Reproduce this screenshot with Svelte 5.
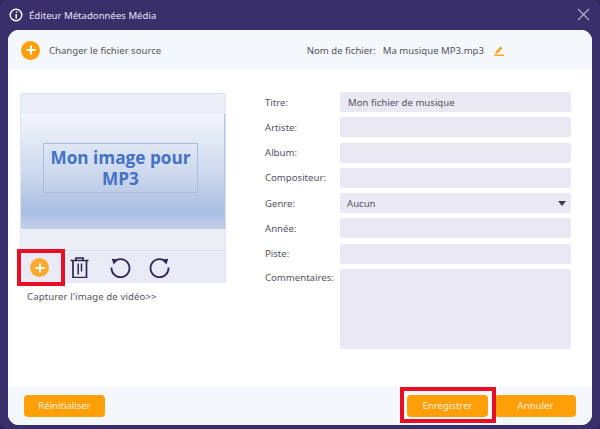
<script>
  const fields = [
    { label: 'Titre:', value: 'Mon fichier de musique' },
    { label: 'Artiste:', value: '' },
    { label: 'Album:', value: '' },
    { label: 'Compositeur:', value: '' },
    { label: 'Genre:', value: 'Aucun', select: true },
    { label: 'Année:', value: '' },
    { label: 'Piste:', value: '' },
    { label: 'Commentaires:', value: '', area: true },
  ]
</script>

<div class="window">
  <div class="titlebar">
    <svg class="info" width="14" height="14" viewBox="0 0 14 14">
      <circle cx="7" cy="7" r="5.8" fill="none" stroke="#fff" stroke-width="1.4" />
      <path d="M7.6 3.400v1.300M7.200 6v4.400" stroke="#fff" stroke-width="1.500" fill="none" />
    </svg>
    <span class="title">Éditeur Métadonnées Média</span>
    <svg class="close" width="13" height="13" viewBox="0 0 13 13">
      <path d="M1 1l11 11M12 1L1 12" stroke="#b4b0cc" stroke-width="1.1" fill="none" />
    </svg>
  </div>

  <div class="panel">
    <div class="source-bar">
      <div class="source">
        <span class="plus big"></span>
        <span>Changer le fichier source</span>
      </div>
      <div class="filename">
        <span>Nom de fichier:</span>
        <span class="name">Ma musique MP3.mp3</span>
        <svg width="10" height="11" viewBox="0 0 10 11">
          <path d="M1.500 7.200L6.700 1.600l1.700 1.600L3.300 8.400 1.400 8.800z" fill="#ff9f08" />
          <rect x="0" y="9.600" width="10" height="1.300" fill="#ff9f08" />
        </svg>
      </div>
    </div>

    <div class="body">
      <div class="left">
        <div class="cover">
          <div class="strip first"></div>
          <div class="picture">
            <div class="picture-box"><span>Mon image pour MP3</span></div>
          </div>
          <div class="strip"></div>
          <div class="tools">
            <span class="plus small"></span>
            <svg class="trash" width="19" height="21" viewBox="0 0 19 21">
              <path d="M0.500 3.500h18M6 3.500V1h7v2.500M3 3.500v17h13.500v-17" fill="none" stroke="#2c2555" stroke-width="1.700" />
              <path d="M8.200 6.500v11M11.500 6.500v8" fill="none" stroke="#2c2555" stroke-width="1.500" />
            </svg>
            <svg class="rotate-left" width="21" height="21" viewBox="0 0 21 21">
              <path d="M4.800 4.200A9 9 0 1 1 1.500 10.500" fill="none" stroke="#2c2555" stroke-width="1.800" />
              <path d="M1.800 1.800l6.200 .6-4.400 5z" fill="#2c2555" />
            </svg>
            <svg class="rotate-right" width="21" height="21" viewBox="0 0 21 21">
              <path d="M16.200 4.200A9 9 0 1 0 19.500 10.500" fill="none" stroke="#2c2555" stroke-width="1.800" />
              <path d="M19.200 1.800l-6.200 .6 4.400 5z" fill="#2c2555" />
            </svg>
          </div>
        </div>
        <div class="capture">Capturer l'image de vidéo&gt;&gt;</div>
        <div class="mark mark-plus"></div>
      </div>

      <div class="form">
        {#each fields as field}
          <div class="label" class:top={field.area}>{field.label}</div>
          <div class="field" class:area={field.area} class:select={field.select}>
            <span>{field.value}</span>
            {#if field.select}<span class="caret"></span>{/if}
          </div>
        {/each}
      </div>
    </div>

    <div class="footer">
      <button>Réinitialiser</button>
      <div class="actions">
        <button>Enregistrer</button>
        <button>Annuler</button>
        <div class="mark mark-save"></div>
      </div>
    </div>
  </div>
</div>

<style>
  :global(body) {
    margin: 0;
    background: #2f2758;
  }
  .window {
    width: 600px;
    height: 429px;
    box-sizing: border-box;
    padding: 0 8px 4px;
    display: flex;
    flex-direction: column;
    background: #382f6b;
    border-radius: 8px;
    font-family: "Noto Sans", sans-serif;
    font-size: 9.6px;
    color: #55525f;
  }
  .titlebar {
    height: 30px;
    flex: none;
    display: flex;
    align-items: center;
    gap: 6px;
    padding-left: 1px;
    color: #e6e4f2;
  }
  .close {
    margin-left: auto;
    margin-right: 2px;
    margin-top: -1px;
  }
  .panel {
    flex: 1;
    display: flex;
    flex-direction: column;
    background: #fff;
    border-radius: 11px;
    overflow: hidden;
  }
  .source-bar {
    height: 40px;
    flex: none;
    display: flex;
    align-items: center;
    justify-content: space-between;
    padding: 0 88px 0 13px;
    background: #f4f7fc;
  }
  .source {
    display: flex;
    align-items: center;
    gap: 9px;
  }
  .filename {
    display: flex;
    align-items: center;
    gap: 7px;
  }
  .filename svg {
    margin-left: 3px;
  }
  .plus {
    display: block;
    position: relative;
    border-radius: 50%;
    background: #ff9f08;
  }
  .plus::before,
  .plus::after {
    content: '';
    position: absolute;
    left: 50%;
    top: 50%;
    background: #fff;
    transform: translate(-50%, -50%);
  }
  .plus::before {
    width: 9px;
    height: 2px;
  }
  .plus::after {
    width: 2px;
    height: 9px;
  }
  .plus.big {
    width: 19px;
    height: 19px;
  }
  .plus.small {
    width: 19px;
    height: 19px;
    margin-top: 1px;
    background: #ffa92e;
  }
  .body {
    flex: 1;
    display: flex;
    padding: 22px 21px 0 12px;
  }
  .left {
    position: relative;
    width: 206px;
    flex: none;
    margin-top: 1px;
  }
  .cover {
    border: 1px solid #e0e3ef;
    border-bottom: none;
    border-radius: 3px 3px 0 0;
    background: #e8ebf6;
    overflow: hidden;
  }
  .strip {
    height: 21px;
    background: #ebedf7;
  }
  .strip.first {
    height: 20px;
  }
  .picture {
    height: 115px;
    display: flex;
    align-items: center;
    padding: 0 0 8px 22px;
    box-sizing: border-box;
    border-right: 1px solid #b4c3de;
    background: linear-gradient(#f2f5fb 0%, #c9d6ec 55%, #a8bee1 85%, #c3d1ea 100%);
  }
  .picture-box {
    width: 155px;
    height: 50px;
    box-sizing: border-box;
    border: 1px solid #a9bddf;
    padding-top: 1px;
    display: flex;
    align-items: center;
    justify-content: center;
    text-align: center;
    font-family: "Open Sans", sans-serif;
    font-size: 17.2px;
    font-weight: 700;
    line-height: 21px;
    color: #4472c4;
  }
  .tools {
    height: 33px;
    border-top: 1px solid #dcdfec;
    box-sizing: border-box;
    display: flex;
    align-items: center;
    padding-left: 9px;
  }
  .trash {
    margin-left: 21px;
  }
  .rotate-left {
    margin-left: 21px;
  }
  .rotate-right {
    margin-left: 18px;
  }
  .capture {
    margin: 7px 0 0 7px;
    letter-spacing: 0.1px;
  }
  .mark {
    position: absolute;
    box-sizing: border-box;
    border: 4px solid #e60f25;
  }
  .mark-plus {
    left: -3px;
    top: 156px;
    width: 48px;
    height: 37px;
  }
  .form {
    flex: 1;
    display: grid;
    grid-template-columns: 75px 1fr;
    grid-auto-rows: 20px;
    row-gap: 5.3px;
    padding-left: 39px;
    align-content: start;
  }
  .label {
    display: flex;
    align-items: center;
    height: 20px;
    white-space: nowrap;
  }
  .label.top {
    height: 16px;
  }
  .field {
    display: flex;
    align-items: center;
    justify-content: space-between;
    padding: 0 8px;
    background: #e9e8f3;
    border-radius: 2px;
  }
  .field.select {
    padding: 0 5px 0 7px;
  }
  .field.area {
    height: 80px;
  }
  .caret {
    width: 0;
    height: 0;
    border-left: 4px solid transparent;
    border-right: 4px solid transparent;
    border-top: 5px solid #3c3a48;
  }
  .footer {
    height: 39px;
    flex: none;
    display: flex;
    align-items: center;
    justify-content: space-between;
    padding: 0 16px;
    background: #f4f7fc;
  }
  .actions {
    position: relative;
    display: flex;
    gap: 7px;
  }
  button {
    width: 81px;
    height: 22px;
    padding: 0;
    border: none;
    border-radius: 4px;
    background: #ff9f08;
    color: #fdf1dc;
    font: inherit;
  }
  .mark-save {
    left: -7px;
    top: -8px;
    width: 96px;
    height: 36px;
  }
</style>
